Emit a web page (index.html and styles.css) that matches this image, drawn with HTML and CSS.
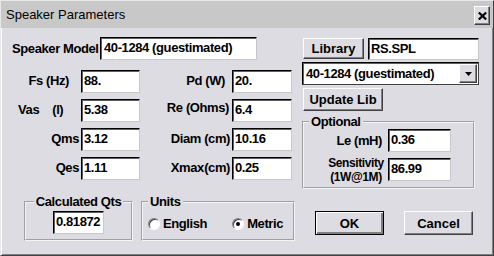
FILE: index.html
```html
<!DOCTYPE html>
<html lang="en">
<head>
    <meta charset="UTF-8">
    <title>Speaker Parameters</title>
    <link rel="stylesheet" href="styles.css">
</head>
<body>
<div class="dialog">
    <div class="titlebar">
        <span class="title">Speaker Parameters</span>
        <button class="close"><svg width="9" height="8" viewBox="0 0 9 8"><path d="M0.8 0.5 L8.2 7.5 M8.2 0.5 L0.8 7.5" stroke="#000" stroke-width="2.2"/></svg></button>
    </div>
    <div class="content">
        <div class="left">
            <div class="model-row">
                <span class="model-label">Speaker Model</span>
                <div class="field model">40-1284 (guestimated)</div>
            </div>
            <div class="params">
                <span class="lbl lbl-fs">Fs (Hz)</span><div class="field">88.</div>
                <span class="lbl lbl-pd">Pd (W)</span><div class="field">20.</div>
                <span class="lbl lbl-vas"><span>Vas</span><span class="unit">(l)</span></span><div class="field">5.38</div>
                <span class="lbl lbl-re">Re (Ohms)</span><div class="field">6.4</div>
                <span class="lbl">Qms</span><div class="field">3.12</div>
                <span class="lbl">Diam (cm)</span><div class="field">10.16</div>
                <span class="lbl">Qes</span><div class="field">1.11</div>
                <span class="lbl lbl-xmax">Xmax (cm)</span><div class="field">0.25</div>
            </div>
            <div class="groups">
                <fieldset class="group qts">
                    <legend class="centered">Calculated Qts</legend>
                    <div class="field qts-field">0.81872</div>
                </fieldset>
                <fieldset class="group units">
                    <legend>Units</legend>
                    <div class="radios">
                        <span class="radio"><span class="circle"></span>English</span>
                        <span class="radio metric"><span class="circle checked"></span>Metric</span>
                    </div>
                </fieldset>
            </div>
        </div>
        <div class="right">
            <div class="lib-row">
                <button class="btn library">Library</button>
                <div class="field lib-file">RS.SPL</div>
            </div>
            <div class="combo">
                <span>40-1284 (guestimated)</span>
                <span class="combo-arrow"><svg width="7" height="4" viewBox="0 0 7 4"><path d="M0 0 H7 L3.5 4 Z" fill="#000"/></svg></span>
            </div>
            <button class="btn update">Update Lib</button>
            <fieldset class="group optional">
                <legend>Optional</legend>
                <div class="opt-row">
                    <span class="opt-label">Le (mH)</span>
                    <div class="field opt-field">0.36</div>
                </div>
                <div class="opt-row sens">
                    <span class="opt-label two-line">Sensitivity<br>(1W@1M)</span>
                    <div class="field opt-field">86.99</div>
                </div>
            </fieldset>
            <div class="actions">
                <button class="btn ok">OK</button>
                <button class="btn cancel">Cancel</button>
            </div>
        </div>
    </div>
</div>
</body>
</html>
```
FILE: styles.css
```css
* {
    margin: 0;
    padding: 0;
    box-sizing: border-box;
}

body {
    width: 494px;
    height: 256px;
    background: #dcdce2;
    font: bold 13px "Liberation Sans", Arial, sans-serif;
    letter-spacing: -0.4px;
    color: #000;
}

.dialog {
    width: 494px;
    height: 256px;
    background: #dcdce2;
    border: 1px solid;
    border-color: #e8e8e8 #404040 #404040 #e8e8e8;
    box-shadow: inset 1px 1px #fff, inset -1px -1px #808080;
}

/* title bar */
.titlebar {
    height: 27px;
    background: #c8c8c8;
    display: flex;
    align-items: center;
    justify-content: space-between;
    padding: 0 3px 0 5px;
}

.title {
    font-weight: normal;
    letter-spacing: 0;
}

.close {
    width: 16px;
    height: 19px;
    margin-top: 2px;
    display: flex;
    align-items: center;
    justify-content: center;
    background: #dcdce2;
    border: 1px solid;
    border-color: #fff #404040 #404040 #fff;
    box-shadow: inset -1px -1px #808080;
}

.content {
    display: flex;
}

.left {
    width: 301px;
}

.right {
    width: 177px;
    display: flex;
    flex-direction: column;
}

/* text boxes */
.field {
    height: 23px;
    background: #fff;
    border: 1px solid;
    border-color: #000 #c8c8c8 #c8c8c8 #000;
    box-shadow: inset 1px 1px #606060;
    padding-left: 2px;
    line-height: 19px;
    white-space: nowrap;
    overflow: hidden;
}

.model-row {
    display: flex;
    align-items: center;
    margin-top: 9px;
    padding-left: 11px;
}

.model-label {
    width: 88px;
}

.model {
    width: 157px;
    padding-left: 3px;
}

.params {
    display: grid;
    grid-template-columns: 80px 59px 92px 60px;
    grid-auto-rows: 23px;
    row-gap: 6px;
    margin-top: 10px;
}

.lbl {
    display: flex;
    align-items: center;
    justify-content: flex-end;
    padding-right: 2px;
    padding-bottom: 2px;
    white-space: nowrap;
}

.lbl-fs {
    padding-right: 12px;
}

.lbl-pd {
    padding-right: 7px;
}

.lbl-re {
    padding-right: 3px;
    padding-bottom: 7px;
}

.lbl-xmax {
    word-spacing: -3px;
}

.lbl-vas {
    justify-content: flex-start;
    padding-left: 17px;
}

.lbl-vas .unit {
    margin-left: 13px;
}

/* group boxes */
.group {
    border: 2px groove #f4f4f4;
}

.group legend {
    line-height: 14px;
    padding: 0 2px;
    margin-left: 5px;
}

.group legend.centered {
    margin-left: auto;
    margin-right: auto;
}

.groups {
    display: flex;
    gap: 8px;
    margin-top: 15px;
    margin-left: 23px;
}

.groups .group {
    height: 46px;
}

.qts {
    width: 109px;
}

.qts-field {
    width: 51px;
    margin: 2px auto 0;
}

.units {
    width: 154px;
}

.radios {
    display: flex;
    padding-left: 5px;
    margin-top: 7px;
}

.radio {
    display: flex;
    align-items: center;
    gap: 3px;
}

.radio.metric {
    margin-left: 25px;
}

.circle {
    width: 12px;
    height: 12px;
    border-radius: 50%;
    background: #fff;
    border: 1px solid;
    border-color: #808080 #fff #fff #808080;
    box-shadow: inset 1px 1px #404040;
    display: flex;
    align-items: center;
    justify-content: center;
}

.circle.checked::after {
    content: "";
    width: 4px;
    height: 4px;
    border-radius: 50%;
    background: #000;
}

/* buttons */
.btn {
    font: inherit;
    color: #000;
    background: #dcdce2;
    border: 1px solid;
    border-color: #fff #404040 #404040 #fff;
    box-shadow: inset -1px -1px #808080;
    text-align: center;
}

.lib-row {
    display: flex;
    margin-top: 10px;
}

.library {
    width: 61px;
    height: 21px;
    margin-left: 1px;
}

.lib-file {
    width: 111px;
    height: 22px;
    margin-left: 4px;
}

.combo {
    height: 23px;
    margin-top: 2px;
    background: #fff;
    border: 1px solid;
    border-color: #000 #404040 #404040 #000;
    box-shadow: inset 1px 1px #606060;
    display: flex;
    align-items: center;
    justify-content: space-between;
    padding: 0 1px 0 3px;
}

.combo-arrow {
    width: 18px;
    height: 19px;
    display: flex;
    align-items: center;
    justify-content: center;
    background: #dcdce2;
    border: 1px solid;
    border-color: #fff #404040 #404040 #fff;
    box-shadow: inset -1px -1px #808080;
}

.update {
    width: 80px;
    height: 23px;
    margin-top: 3px;
    margin-left: 1px;
}

.optional {
    width: 173px;
    height: 74px;
    margin-top: 4px;
}

.opt-row {
    display: flex;
    align-items: center;
    height: 23px;
}

.opt-row.sens {
    margin-top: 6px;
}

.opt-label {
    width: 84px;
    text-align: right;
    padding-right: 6px;
}

.opt-label.two-line {
    font-size: 12px;
    text-align: center;
    line-height: 14px;
    padding-left: 22px;
    padding-right: 2px;
}

.opt-field {
    width: 63px;
}

.actions {
    display: flex;
    margin-top: 22px;
}

.ok {
    width: 69px;
    height: 24px;
    margin-left: 13px;
    border-color: #000;
    box-shadow: inset 1px 1px #fff, inset -2px -2px #808080;
}

.cancel {
    width: 69px;
    height: 24px;
    margin-left: 20px;
}
```
